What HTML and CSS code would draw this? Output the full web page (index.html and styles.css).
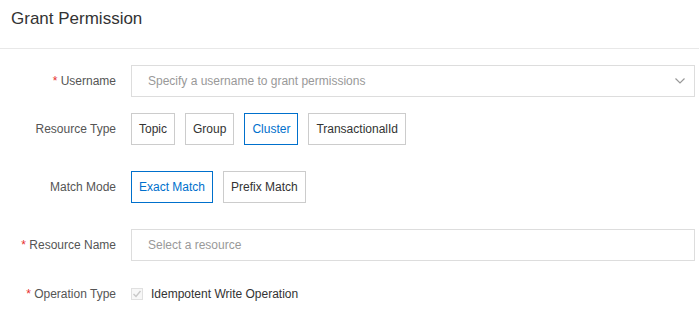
FILE: index.html
```html
<!doctype html>
<html lang="en">
<head>
	<meta charset="utf-8">
	<title>Grant Permission</title>
	<link rel="stylesheet" href="styles.css">
</head>
<body>
	<div class="dialog">
		<div class="header">
			<div class="title">Grant Permission</div>
		</div>
		<div class="form">
			<div class="row row-first">
				<div class="label"><span class="req">*</span> Username</div>
				<div class="control">
					<div class="select">
						<span class="placeholder">Specify a username to grant permissions</span>
						<svg class="arrow" width="10" height="6" viewBox="0 0 10 6"><path d="M0.5 0.5 L5 5 L9.5 0.5" fill="none" stroke="#999" stroke-width="1.2"/></svg>
					</div>
				</div>
			</div>
			<div class="row">
				<div class="label">Resource Type</div>
				<div class="control tags">
					<button class="tag">Topic</button>
					<button class="tag">Group</button>
					<button class="tag active">Cluster</button>
					<button class="tag">TransactionalId</button>
				</div>
			</div>
			<div class="row">
				<div class="label">Match Mode</div>
				<div class="control tags">
					<button class="tag active">Exact Match</button>
					<button class="tag">Prefix Match</button>
				</div>
			</div>
			<div class="row row-name">
				<div class="label"><span class="req">*</span> Resource Name</div>
				<div class="control">
					<div class="select">
						<span class="placeholder">Select a resource</span>
					</div>
				</div>
			</div>
			<div class="row row-last">
				<div class="label"><span class="req">*</span> Operation Type</div>
				<div class="control">
					<label class="check">
						<span class="box">
							<svg width="10" height="10" viewBox="0 0 10 10"><path d="M1.5 5 L4 7.5 L8.5 2" fill="none" stroke="#c8c8c8" stroke-width="1.4"/></svg>
						</span>
						Idempotent Write Operation
					</label>
				</div>
			</div>
		</div>
	</div>
</body>
</html>
```

FILE: styles.css
```css
body{
	margin: 0;
	background: #fff;
	font-family: "Liberation Sans", Arial, sans-serif;
	font-size: 12px;
	color: #333;
}
.header{
	height: 48px;
	border-bottom: 1px solid #e8e8e8;
	padding: 0 11px;
}
.title{
	padding-top: 7px;
	font-size: 17px;
	line-height: 24px;
	color: #333;
}
.form{
	padding: 16px 4px 0 0;
}
.row{
	display: flex;
	align-items: center;
	min-height: 32px;
	margin-bottom: 26px;
}
.row-first{
	margin-bottom: 16px;
}
.row-name{
	margin-bottom: 17px;
}
.row-last{
	margin-bottom: 0;
}
.label{
	width: 116px;
	padding-right: 15px;
	text-align: right;
	color: #555;
	flex-shrink: 0;
}
.req{
	color: #e62e2e;
}
.control{
	flex: 1;
}
.select{
	height: 32px;
	box-sizing: border-box;
	border: 1px solid #ddd;
	display: flex;
	align-items: center;
	justify-content: space-between;
	padding: 0 9px 0 16px;
}
.placeholder{
	color: #999;
}
.tags{
	display: flex;
	gap: 10px;
}
.tag{
	height: 32px;
	padding: 0 7px;
	border: 1px solid #ccc;
	background: #fff;
	font-family: inherit;
	font-size: 12px;
	color: #333;
}
.tag.active{
	border-color: #0070cc;
	color: #0070cc;
}
.check{
	display: flex;
	align-items: center;
	gap: 8px;
	color: #333;
}
.box{
	width: 12px;
	height: 12px;
	box-sizing: border-box;
	border: 1px solid #e0e0e0;
	background: #f7f7f7;
	display: flex;
	align-items: center;
	justify-content: center;
}
```
